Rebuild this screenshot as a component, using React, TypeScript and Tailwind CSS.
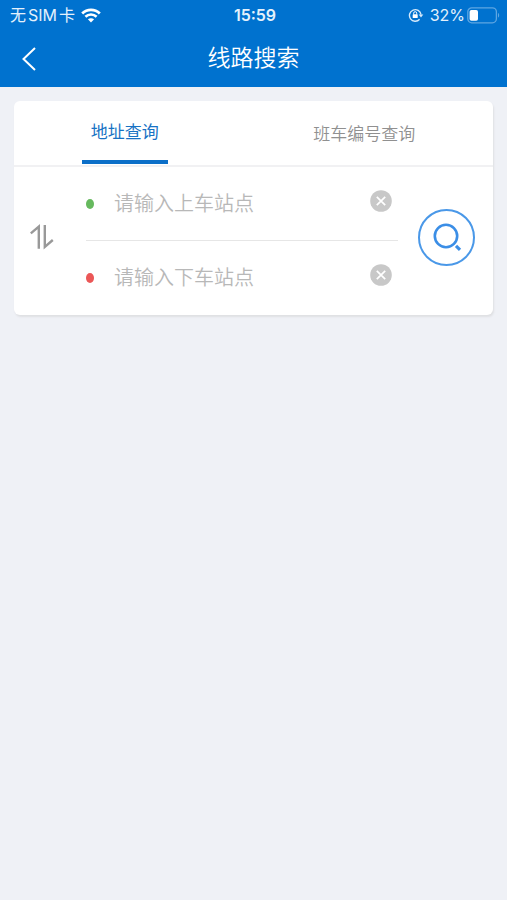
import { useState } from "react";

function WifiIcon() {
  return (
    <svg viewBox="0 0 20 15" className="h-[15px] w-5" fill="none" aria-hidden="true">
      <path d="M1.2 5.4C6.2.6 13.8.6 18.8 5.4" stroke="white" strokeWidth="2.8" />
      <path d="M4.4 8.8C7.6 5.8 12.4 5.8 15.6 8.8" stroke="white" strokeWidth="2.6" />
      <path d="M10 14.4 6.9 11.3C8.7 9.8 11.3 9.8 13.1 11.3Z" fill="white" />
    </svg>
  );
}

function RotationLockIcon() {
  return (
    <svg viewBox="0 0 16 14" className="h-3.5 w-4" fill="none" aria-hidden="true">
      <path d="M11.6 11.3A5.8 5.8 0 1 1 13 6.6" stroke="#d5e9fa" strokeWidth="1.4" />
      <path d="M10.7 6.4h4.6L13 9.4Z" fill="#d5e9fa" />
      <rect x="4.7" y="6.3" width="5" height="3.8" rx=".6" fill="white" />
      <path d="M5.7 6.5V5.2a1.5 1.5 0 0 1 3 0v1.3" stroke="white" strokeWidth="1" />
    </svg>
  );
}

function BatteryIcon() {
  return (
    <svg viewBox="0 0 33 17" className="h-[17px] w-[33px]" fill="none" aria-hidden="true">
      <rect x=".8" y=".8" width="28.6" height="15" rx="4" stroke="#5ea6e2" strokeWidth="1.3" />
      <rect x="2.6" y="3" width="8.4" height="10.8" rx="1.8" fill="white" />
      <path d="M31 6v4.6c1.6-.6 1.6-4 0-4.6Z" fill="#5ea6e2" />
    </svg>
  );
}

function StatusBar() {
  return (
    <div className="grid h-[30px] grid-cols-[1fr_auto_1fr] items-center pr-[7px] pl-2.5 text-base text-[#e4f1fc]">
      <div className="flex items-center gap-0.5">
        <span>无</span>
        <span>SIM</span>
        <span>卡</span>
        <span className="ml-1">
          <WifiIcon />
        </span>
      </div>
      <span className="text-center font-semibold">15:59</span>
      <div className="flex items-center justify-end">
        <RotationLockIcon />
        <span className="mr-0.5 ml-1.5">32%</span>
        <BatteryIcon />
      </div>
    </div>
  );
}

function SwapIcon() {
  return (
    <svg viewBox="0 0 24 26" className="h-[26px] w-6" fill="none" stroke="#999" strokeWidth="2.4" aria-hidden="true">
      <path d="M.8 9.4 8.8 2.6v22.2" />
      <path d="M14.8 1v21.8l8-6.8" />
    </svg>
  );
}

function SearchIcon() {
  return (
    <svg viewBox="0 0 30 30" className="size-[30px]" fill="none" stroke="#3b8ee6" aria-hidden="true">
      <circle cx="14" cy="14" r="11.2" strokeWidth="2.6" />
      <path d="m24 23.8 4 4" strokeWidth="3.2" />
    </svg>
  );
}

function StationInput({
  label,
  dotClass,
  value,
  onChange,
}: {
  label: string;
  dotClass: string;
  value: string;
  onChange: (value: string) => void;
}) {
  return (
    <div className="flex h-[74px] items-center">
      <span className={`h-2.5 w-2 shrink-0 rounded-[50%] ${dotClass}`} />
      <input
        type="text"
        aria-label={label}
        placeholder={label}
        value={value}
        onChange={(e) => onChange(e.target.value)}
        className="ml-5 min-w-0 flex-1 text-xl font-[350] text-gray-700 outline-none placeholder:text-[#b8b8b8]"
      />
      <button type="button" aria-label="清除" onClick={() => onChange("")} className="mr-1.5 mb-1.5">
        <svg viewBox="0 0 22 22" className="size-[22px]" aria-hidden="true">
          <circle cx="11" cy="11" r="10.8" fill="#c8c8c8" />
          <path d="m6.8 6.8 8.4 8.4m0-8.4-8.4 8.4" stroke="white" strokeWidth="1.7" />
        </svg>
      </button>
    </div>
  );
}

const tabs = ["地址查询", "班车编号查询"];

export default function App() {
  const [activeTab, setActiveTab] = useState(0);
  const [from, setFrom] = useState("");
  const [to, setTo] = useState("");

  const swap = () => {
    setFrom(to);
    setTo(from);
  };

  return (
    <div className="min-h-screen bg-[#eff1f6] font-['Inter','Noto_Sans_CJK_SC',sans-serif]">
      <header className="bg-[#0072cf] text-white">
        <StatusBar />
        <div className="grid h-[57px] grid-cols-[60px_1fr_60px] items-center">
          <button type="button" aria-label="返回" className="pl-[22px]">
            <svg viewBox="0 0 14 24" className="h-6 w-3.5" fill="none" stroke="white" strokeWidth="2" aria-hidden="true">
              <path d="M13 1 1.5 12 13 23" />
            </svg>
          </button>
          <h1 className="text-center text-[23px] font-[350]">线路搜索</h1>
        </div>
      </header>

      <main className="px-3.5 pt-3.5">
        <section className="rounded-md bg-white shadow-[1px_2px_2px_#dfe0e3]">
          <div className="flex h-[66px] border-b-2 border-[#f1f1f3]" role="tablist">
            {tabs.map((tab, index) => (
              <div key={tab} className="flex flex-1 justify-center pr-[18px]">
                <button
                  type="button"
                  role="tab"
                  aria-selected={activeTab === index}
                  onClick={() => setActiveTab(index)}
                  className={`h-[63px] border-b-4 px-[9px] text-[17px] ${
                    activeTab === index
                      ? "border-[#0b6fc8] pt-1 text-[#1872c4]"
                      : "border-transparent pt-2 font-[350] text-[#909090]"
                  }`}
                >
                  {tab}
                </button>
              </div>
            ))}
          </div>

          <form className="flex items-center pr-[18px] pl-4" onSubmit={(e) => e.preventDefault()}>
            <button type="button" aria-label="交换站点" onClick={swap} className="mb-2">
              <SwapIcon />
            </button>
            <div className="mr-5 ml-8 min-w-0 flex-1 divide-y divide-[#e6e6e6]">
              <StationInput label="请输入上车站点" dotClass="bg-[#66b95e]" value={from} onChange={setFrom} />
              <StationInput label="请输入下车站点" dotClass="bg-[#eb5757]" value={to} onChange={setTo} />
            </div>
            <button
              type="submit"
              aria-label="搜索"
              className="mb-2 flex size-[57px] shrink-0 items-center justify-center rounded-full border-2 border-[#4a98e8]"
            >
              <SearchIcon />
            </button>
          </form>
        </section>
      </main>
    </div>
  );
}
